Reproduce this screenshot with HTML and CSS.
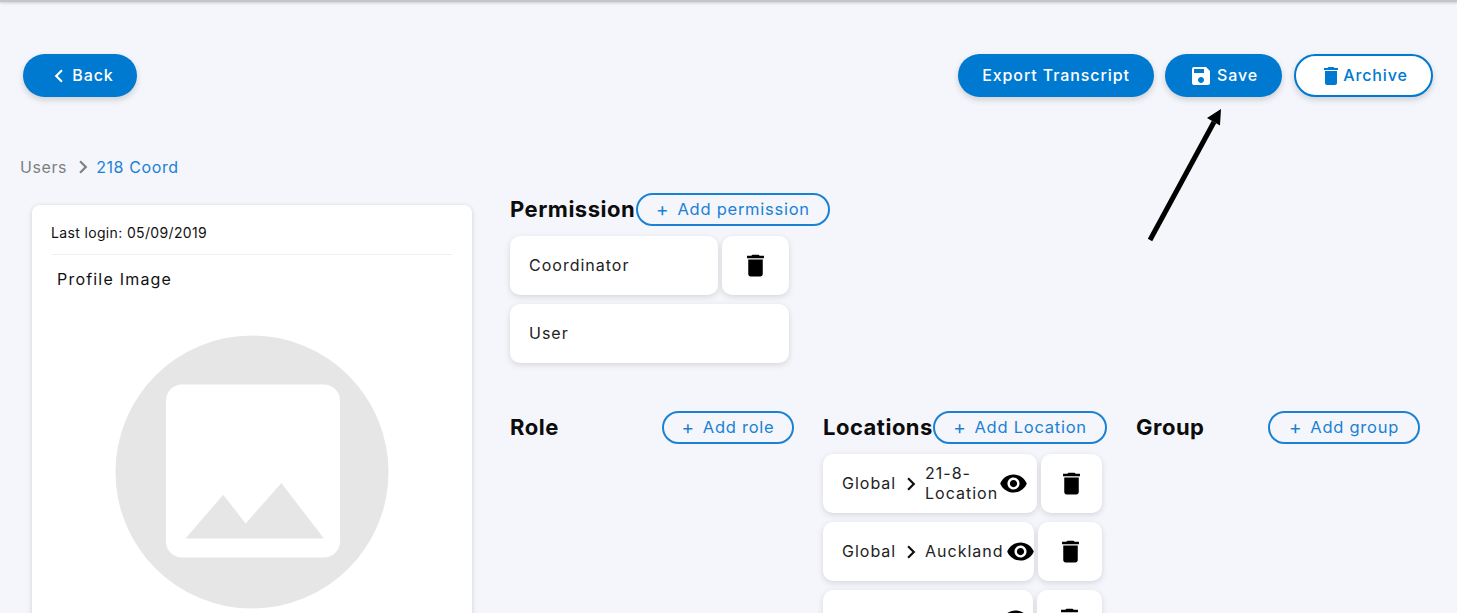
FILE: index.html
```html
<!DOCTYPE html>
<html lang="en">
<head>
<meta charset="utf-8">
<title>218 Coord</title>
<link rel="stylesheet" href="styles.css">
</head>
<body>
<div class="topline"></div>
<main class="page">
  <header class="toolbar">
    <button class="btn solid back"><svg class="ic ic-back" viewBox="0 0 24 24"><path d="M15.41 7.41L14 6l-6 6 6 6 1.41-1.41L10.83 12z"/></svg><span class="label">Back</span></button>
    <div class="actions">
      <button class="btn solid export"><span class="label">Export Transcript</span></button>
      <button class="btn solid save"><svg class="ic ic-save" viewBox="0 0 24 24"><path d="M17 3H5c-1.11 0-2 .9-2 2v14c0 1.1.89 2 2 2h14c1.1 0 2-.9 2-2V7l-4-4zm-5 16c-1.66 0-3-1.34-3-3s1.34-3 3-3 3 1.34 3 3-1.34 3-3 3zm3-10H5V5h10v4z"/></svg><span class="label">Save</span></button>
      <button class="btn outline archive"><svg class="ic ic-arch" viewBox="0 0 24 24"><path d="M6 19c0 1.1.9 2 2 2h8c1.1 0 2-.9 2-2V7H6v12zM19 4h-3.5l-1-1h-5l-1 1H5v2h14V4z"/></svg><span class="label">Archive</span></button>
    </div>
  </header>
  <nav class="crumbs"><span class="crumb-root">Users</span><svg class="crumb-sep" viewBox="0 0 24 24"><path d="M8.59 16.59L13.17 12 8.59 7.41 10 6l6 6-6 6z"/></svg><span class="crumb-cur">218 Coord</span></nav>
  <div class="content">
    <aside class="card">
      <p class="login">Last login: 05/09/2019</p>
      <p class="profile">Profile Image</p>
      <svg class="avatar" viewBox="0 0 274 274"><circle cx="137" cy="137" r="136.5" fill="#e6e6e6"/><rect x="51" y="49.500" width="174" height="173" rx="16" fill="#fff"/><path d="M70.500 203.500L108.200 159.700 130.700 188.500 166.300 148 209 203.500z" fill="#e6e6e6"/></svg>
    </aside>
    <div class="details">
      <section class="perm">
        <div class="head perm-head"><h2>Permission</h2><button class="add add-perm"><span class="plus">+</span><span class="label">Add permission</span></button></div>
        <div class="row"><div class="tile tile-coord"><span class="label">Coordinator</span></div><div class="tile icon-tile tile-perm-del"><svg class="trash" viewBox="0 0 24 24"><path d="M6 19c0 1.1.9 2 2 2h8c1.1 0 2-.9 2-2V7H6v12zM19 4h-3.5l-1-1h-5l-1 1H5v2h14V4z"/></svg></div></div>
        <div class="row"><div class="tile tile-user"><span class="label">User</span></div></div>
      </section>
      <div class="cols">
        <section>
          <div class="head spread"><h2>Role</h2><button class="add add-role"><span class="plus">+</span><span class="label">Add role</span></button></div>
        </section>
        <section>
          <div class="head"><h2>Locations</h2><button class="add add-loc"><span class="plus">+</span><span class="label">Add Location</span></button></div>
          <div class="row">
            <div class="tile loc loc-a"><span class="g label">Global</span><svg class="chev" viewBox="0 0 24 24"><path d="M8.59 16.59L13.17 12 8.59 7.41 10 6l6 6-6 6z"/></svg><span class="place label wrap">21-8-Location</span><svg class="eye" viewBox="0 0 24 24"><path d="M12 4.500C7 4.500 2.730 7.610 1 12c1.730 4.390 6 7.500 11 7.500s9.270-3.110 11-7.500c-1.730-4.390-6-7.500-11-7.500zM12 17c-2.760 0-5-2.240-5-5s2.240-5 5-5 5 2.240 5 5-2.240 5-5 5zm0-8c-1.660 0-3 1.340-3 3s1.340 3 3 3 3-1.340 3-3-1.340-3-3-3z"/></svg></div>
            <div class="tile icon-tile del-a"><svg class="trash" viewBox="0 0 24 24"><path d="M6 19c0 1.1.9 2 2 2h8c1.1 0 2-.9 2-2V7H6v12zM19 4h-3.5l-1-1h-5l-1 1H5v2h14V4z"/></svg></div>
          </div>
          <div class="row">
            <div class="tile loc loc-b"><span class="g label">Global</span><svg class="chev" viewBox="0 0 24 24"><path d="M8.59 16.59L13.17 12 8.59 7.41 10 6l6 6-6 6z"/></svg><span class="place label auck">Auckland</span><svg class="eye" viewBox="0 0 24 24"><path d="M12 4.500C7 4.500 2.730 7.610 1 12c1.730 4.390 6 7.500 11 7.500s9.270-3.110 11-7.500c-1.730-4.390-6-7.500-11-7.500zM12 17c-2.760 0-5-2.240-5-5s2.240-5 5-5 5 2.240 5 5-2.240 5-5 5zm0-8c-1.660 0-3 1.340-3 3s1.340 3 3 3 3-1.340 3-3-1.340-3-3-3z"/></svg></div>
            <div class="tile icon-tile del-b"><svg class="trash" viewBox="0 0 24 24"><path d="M6 19c0 1.1.9 2 2 2h8c1.1 0 2-.9 2-2V7H6v12zM19 4h-3.5l-1-1h-5l-1 1H5v2h14V4z"/></svg></div>
          </div>
          <div class="row">
            <div class="tile loc loc-c"><span class="g"></span><svg class="chev" viewBox="0 0 24 24"><path d="M8.59 16.59L13.17 12 8.59 7.41 10 6l6 6-6 6z"/></svg><span class="place third"></span><svg class="eye" viewBox="0 0 24 24"><path d="M12 4.500C7 4.500 2.730 7.610 1 12c1.730 4.390 6 7.500 11 7.500s9.270-3.110 11-7.500c-1.730-4.390-6-7.500-11-7.500zM12 17c-2.760 0-5-2.240-5-5s2.240-5 5-5 5 2.240 5 5-2.240 5-5 5zm0-8c-1.660 0-3 1.340-3 3s1.340 3 3 3 3-1.340 3-3-1.340-3-3-3z"/></svg></div>
            <div class="tile icon-tile del-c"><svg class="trash" viewBox="0 0 24 24"><path d="M6 19c0 1.1.9 2 2 2h8c1.1 0 2-.9 2-2V7H6v12zM19 4h-3.5l-1-1h-5l-1 1H5v2h14V4z"/></svg></div>
          </div>
        </section>
        <section>
          <div class="head spread"><h2>Group</h2><button class="add add-group"><span class="plus">+</span><span class="label">Add group</span></button></div>
        </section>
      </div>
    </div>
  </div>
</main>
<svg class="arrow" viewBox="0 0 90 150"><path d="M3 135L67 17" stroke="#000" stroke-width="5" fill="none"/><path d="M74 4L73 20.500 60 13z" fill="#000"/></svg>
</body>
</html>
```
FILE: styles.css
```css
* { box-sizing: border-box; }
html, body { margin: 0; height: 613px; overflow: hidden; }
body {
  position: relative;
  background: #f4f6fb;
  color: #111;
  font-family: Inter, "Open Sans", sans-serif;
}
.topline { height: 2px; background: #c4c5c8; box-shadow: 0 1px 3px rgba(0,0,0,.22); }
.page { padding: 52px 24px 0 20px; }
.toolbar { display: flex; justify-content: space-between; padding-left: 3px; }
.actions { display: flex; }
.label { padding-bottom: 2px; }
.btn {
  height: 43px;
  border-radius: 22px;
  display: flex;
  align-items: center;
  justify-content: center;
  font: 500 16px Inter, sans-serif;
  letter-spacing: .9px;
  box-shadow: 0 3px 6px rgba(0,0,0,.16);
  padding: 0;
}
.solid { background: #0079d1; color: #fff; border: 0; fill: #fff; }
.outline { background: #fff; color: #0079d1; border: 2px solid #0079d1; fill: #0079d1; }
.ic { display: block; flex: none; }
.back { width: 114px; }
.ic-back { width: 26px; height: 26px; }
.export { width: 196px; }
.save { width: 117px; margin-left: 11px; }
.ic-save { width: 24px; height: 24px; margin-right: 4px; }
.archive { width: 139px; margin-left: 12px; }
.ic-arch { width: 24px; height: 24px; }

.crumbs { display: flex; align-items: center; margin-top: 60px; height: 20px; font-size: 16px; letter-spacing: .6px; }
.crumb-root { color: #7f7f7f; }
.crumb-sep { width: 26px; height: 26px; fill: #7f7f7f; margin: 0 0 0 3px; }
.crumb-cur { color: #1a82d4; }

.content { display: flex; align-items: flex-start; margin-top: 28px; padding-left: 12px; }
.card {
  width: 440px;
  height: 500px;
  flex: none;
  background: #fff;
  border-radius: 8px;
  box-shadow: 0 1px 5px rgba(0,0,0,.16);
  padding: 0 20px;
}
.login { margin: 0; height: 50px; padding-top: 19px; line-height: 18px; font-size: 14px; letter-spacing: .35px; text-indent: -1px; border-bottom: 1px solid #efefef; }
.profile { margin: 14px 0 0 5px; line-height: 20px; font-size: 16px; letter-spacing: 1.2px; }
.avatar { display: block; width: 274px; height: 274px; margin: 46px 0 0 63px; }

.details { margin-left: 38px; width: 910px; }
.perm-head { margin-top: -12px; }
.head { display: flex; align-items: center; height: 33px; margin-bottom: 10px; }
.spread { justify-content: space-between; }
h2 { margin: 0; padding-bottom: 2px; font-size: 22px; font-weight: 700; letter-spacing: .5px; color: #0c0c0c; }
.add {
  flex: none;
  height: 33px;
  background: transparent;
  border: 2px solid #1a82d4;
  border-radius: 17px;
  color: #1a82d4;
  font: 400 16.500px Inter, sans-serif;
  letter-spacing: .75px;
  padding: 0;
  display: flex;
  align-items: center;
  justify-content: center;
}
.plus { margin-right: 8px; font-size: 19px; }
.perm h2 { width: 126px; flex: none; }
.add-perm { width: 194px; }
.add-role { width: 132px; }
.add-loc { width: 174px; }
.add-group { width: 152px; }
.cols h2 { flex: none; }
.cols .head h2 + .add-loc { margin-left: auto; }
.row { display: flex; margin-bottom: 9px; }
.tile {
  height: 59px;
  background: #fff;
  border-radius: 10px;
  box-shadow: 0 2px 6px rgba(0,0,0,.13);
  display: flex;
  align-items: center;
  font-size: 16px;
  letter-spacing: 1px;
  color: #222;
  padding-left: 19px;
}
.tile-coord { width: 208px; }
.tile-perm-del { width: 67px; margin-left: 4px; }
.tile-user { width: 279px; }
.icon-tile { justify-content: center; padding: 0; }
.trash { width: 29px; height: 29px; fill: #000; }
.perm { margin-bottom: 48px; }
.cols { display: grid; grid-template-columns: 284px 284px 284px; column-gap: 29px; }
.loc-a { width: 214px; }
.del-a { width: 61px; margin-left: 4px; }
.loc-b { width: 211px; }
.del-b { width: 64px; margin-left: 4px; }
.loc-c { width: 210px; }
.del-c { width: 65px; margin-left: 4px; }
.g { flex: none; width: 56px; }
.chev { flex: none; width: 26px; height: 26px; fill: #111; margin-right: 1px; }
.place { flex: none; line-height: 20px; }
.wrap { width: 74px; }
.auck { width: 81px; }
.third { width: 76px; }
.eye { flex: none; width: 29px; height: 29px; fill: #000; }
.arrow { position: absolute; left: 1147px; top: 105px; width: 90px; height: 150px; }
```
